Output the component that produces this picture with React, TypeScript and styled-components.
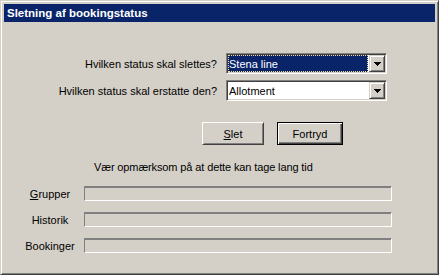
import React from 'react'
import styled, { createGlobalStyle } from 'styled-components'

const GlobalStyle = createGlobalStyle`
  body {
    margin: 0;
    background: #d4d0c8;
    font-family: "Liberation Sans", Arial, sans-serif;
    font-size: 11px;
    color: #000;
  }
`

const Window = styled.div`
  width: 439px;
  height: 275px;
  box-sizing: border-box;
  display: flex;
  flex-direction: column;
  background: #d4d0c8;
  border: 1px solid;
  border-color: #d4d0c8 #404040 #404040 #d4d0c8;
  box-shadow: inset 1px 1px #fff, inset -1px -1px #808080;
  padding: 3px;
`

const TitleBar = styled.div`
  height: 18px;
  flex-shrink: 0;
  display: flex;
  align-items: center;
  padding-left: 3px;
  background: #0a246a;
  color: #fff;
  font-weight: bold;
  font-size: 11.5px;
`

const Body = styled.div`
  flex: 1;
  display: flex;
  flex-direction: column;
`

const Form = styled.div`
  display: grid;
  grid-template-columns: 213px 161px;
  grid-auto-rows: 21px;
  column-gap: 9px;
  row-gap: 6px;
  align-items: center;
  margin-top: 31px;
`

const FieldLabel = styled.div`
  text-align: right;
  white-space: nowrap;
`

const Combo = styled.div`
  box-sizing: border-box;
  height: 21px;
  display: flex;
  align-items: stretch;
  gap: 1px;
  padding: 1px;
  background: #fff;
  border: 1px solid;
  border-color: #808080 #fff #fff #808080;
  box-shadow: inset 1px 1px #404040, inset -1px -1px #d4d0c8;
`

const ComboValue = styled.div<{ $selected?: boolean }>`
  flex: 1;
  display: flex;
  align-items: center;
  padding-left: 1px;
  background: ${({ $selected }) => ($selected ? '#0a246a' : '#fff')};
  color: ${({ $selected }) => ($selected ? '#fff' : '#000')};
  outline: ${({ $selected }) => ($selected ? '1px dotted #f5db95' : 'none')};
  outline-offset: -1px;
`

const DropButton = styled.div`
  width: 16px;
  box-sizing: border-box;
  display: flex;
  align-items: center;
  justify-content: center;
  background: #d4d0c8;
  border: 1px solid;
  border-color: #d4d0c8 #404040 #404040 #d4d0c8;
  box-shadow: inset 1px 1px #fff, inset -1px -1px #808080;
`

const ButtonRow = styled.div`
  display: flex;
  gap: 13px;
  padding-left: 198px;
  margin-top: 21px;
`

const Button = styled.button<{ $default?: boolean; $width: number }>`
  width: ${({ $width }) => $width}px;
  height: 23px;
  padding: 0;
  font: inherit;
  color: #000;
  background: #d4d0c8;
  border: 1px solid;
  border-color: ${({ $default }) => ($default ? '#000' : '#fff #404040 #404040 #fff')};
  box-shadow: ${({ $default }) =>
    $default
      ? 'inset 1px 1px #fff, inset -1px -1px #404040, inset -2px -2px #808080'
      : 'inset 1px 1px #d4d0c8, inset -1px -1px #808080'};
`

const Warning = styled.div`
  line-height: 13px;
  padding-left: 90px;
  margin-top: 16px;
  letter-spacing: -0.12px;
`

const Progress = styled.div`
  display: grid;
  grid-template-columns: 68px 308px;
  grid-auto-rows: 15px;
  row-gap: 11px;
  align-items: center;
  padding-left: 12px;
  margin-top: 12px;
`

const ProgressLabel = styled.div`
  text-align: center;
  white-space: nowrap;
`

const ProgressBar = styled.div`
  height: 15px;
  box-sizing: border-box;
  border: 1px solid;
  border-color: #808080 #fff #fff #808080;
  box-shadow: inset 0 1px #808080;
`

function Arrow() {
  return (
    <svg width="7" height="4" viewBox="0 0 7 4" shapeRendering="crispEdges">
      <rect x="0" y="0" width="7" height="1" fill="#000" />
      <rect x="1" y="1" width="5" height="1" fill="#000" />
      <rect x="2" y="2" width="3" height="1" fill="#000" />
      <rect x="3" y="3" width="1" height="1" fill="#000" />
    </svg>
  )
}

export default function App() {
  return (
    <>
      <GlobalStyle />
      <Window>
        <TitleBar>Sletning af bookingstatus</TitleBar>
        <Body>
          <Form>
            <FieldLabel>Hvilken status skal slettes?</FieldLabel>
            <Combo>
              <ComboValue $selected>Stena line</ComboValue>
              <DropButton><Arrow /></DropButton>
            </Combo>
            <FieldLabel>Hvilken status skal erstatte den?</FieldLabel>
            <Combo>
              <ComboValue>Allotment</ComboValue>
              <DropButton><Arrow /></DropButton>
            </Combo>
          </Form>
          <ButtonRow>
            <Button $width={62}><u>S</u>let</Button>
            <Button $width={66} $default>Fortryd</Button>
          </ButtonRow>
          <Warning>Vær opmærksom på at dette kan tage lang tid</Warning>
          <Progress>
            <ProgressLabel><u>G</u>rupper</ProgressLabel>
            <ProgressBar />
            <ProgressLabel>Historik</ProgressLabel>
            <ProgressBar />
            <ProgressLabel>Bookinger</ProgressLabel>
            <ProgressBar />
          </Progress>
        </Body>
      </Window>
    </>
  )
}
